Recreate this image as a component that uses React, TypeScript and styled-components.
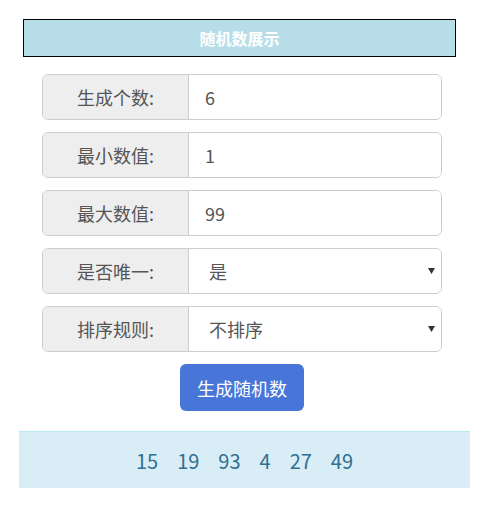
import styled, { createGlobalStyle } from "styled-components";

const GlobalStyle = createGlobalStyle`
  body {
    margin: 0;
    background: #fff;
    font-family: "Microsoft YaHei", "Noto Sans CJK SC", "Noto Sans", sans-serif;
  }
  * {
    box-sizing: border-box;
  }
`;

const Page = styled.div`
  width: 486px;
  padding-top: 19px;
  display: flex;
  flex-direction: column;
`;

const Title = styled.div`
  margin-left: 23px;
  width: 433px;
  height: 38px;
  border: 1px solid #000;
  background: #b6dde8;
  color: #fff;
  font-size: 16px;
  font-weight: bold;
  display: flex;
  align-items: center;
  justify-content: center;
`;

const Form = styled.div`
  margin: 17px 0 0 42px;
  width: 400px;
  display: flex;
  flex-direction: column;
  gap: 12px;
`;

const Group = styled.div`
  display: flex;
  height: 46px;
  border: 1px solid #ccc;
  border-radius: 6px;
  overflow: hidden;
  position: relative;
`;

const Addon = styled.div`
  width: 146px;
  flex-shrink: 0;
  background: #eee;
  border-right: 1px solid #ccc;
  color: #555;
  font-size: 18px;
  display: flex;
  align-items: center;
  justify-content: center;
`;

const Input = styled.input`
  flex: 1;
  min-width: 0;
  border: none;
  outline: none;
  padding: 0 16px;
  font-family: inherit;
  font-size: 18px;
  color: #555;
  background: #fff;
`;

const Select = styled.select`
  flex: 1;
  min-width: 0;
  border: none;
  outline: none;
  appearance: none;
  padding: 0 20px;
  font-family: inherit;
  font-size: 18px;
  color: #555;
  background: #fff;
`;

const Caret = styled.svg`
  position: absolute;
  right: 6px;
  top: 19px;
  pointer-events: none;
`;

const Button = styled.button`
  align-self: flex-start;
  margin: 12px 0 0 180px;
  width: 124px;
  height: 47px;
  border: none;
  border-radius: 6px;
  background: #4876d8;
  color: #fff;
  font-family: inherit;
  font-size: 18px;
`;

const Result = styled.div`
  margin: 20px 0 0 19px;
  width: 451px;
  height: 57px;
  background: #d9edf7;
  border-top: 1px solid #bce8f1;
  color: #31708f;
  font-size: 20px;
  display: flex;
  align-items: center;
  justify-content: center;
  gap: 19px;
`;

const fields = [
  { label: "生成个数:", value: "6" },
  { label: "最小数值:", value: "1" },
  { label: "最大数值:", value: "99" },
];

const selects = [
  { label: "是否唯一:", options: ["是", "否"] },
  { label: "排序规则:", options: ["不排序", "升序", "降序"] },
];

const numbers = [15, 19, 93, 4, 27, 49];

const App = () => {
  return (
    <Page>
      <GlobalStyle />
      <Title>随机数展示</Title>
      <Form>
        {fields.map((f) => (
          <Group key={f.label}>
            <Addon>{f.label}</Addon>
            <Input defaultValue={f.value} />
          </Group>
        ))}
        {selects.map((s) => (
          <Group key={s.label}>
            <Addon>{s.label}</Addon>
            <Select defaultValue={s.options[0]}>
              {s.options.map((o) => (
                <option key={o}>{o}</option>
              ))}
            </Select>
            <Caret width="7" height="6" viewBox="0 0 7 6">
              <path d="M0 0h7L3.5 6z" fill="#333" />
            </Caret>
          </Group>
        ))}
      </Form>
      <Button>生成随机数</Button>
      <Result>
        {numbers.map((n, i) => (
          <span key={i}>{n}</span>
        ))}
      </Result>
    </Page>
  );
};

export default App;
